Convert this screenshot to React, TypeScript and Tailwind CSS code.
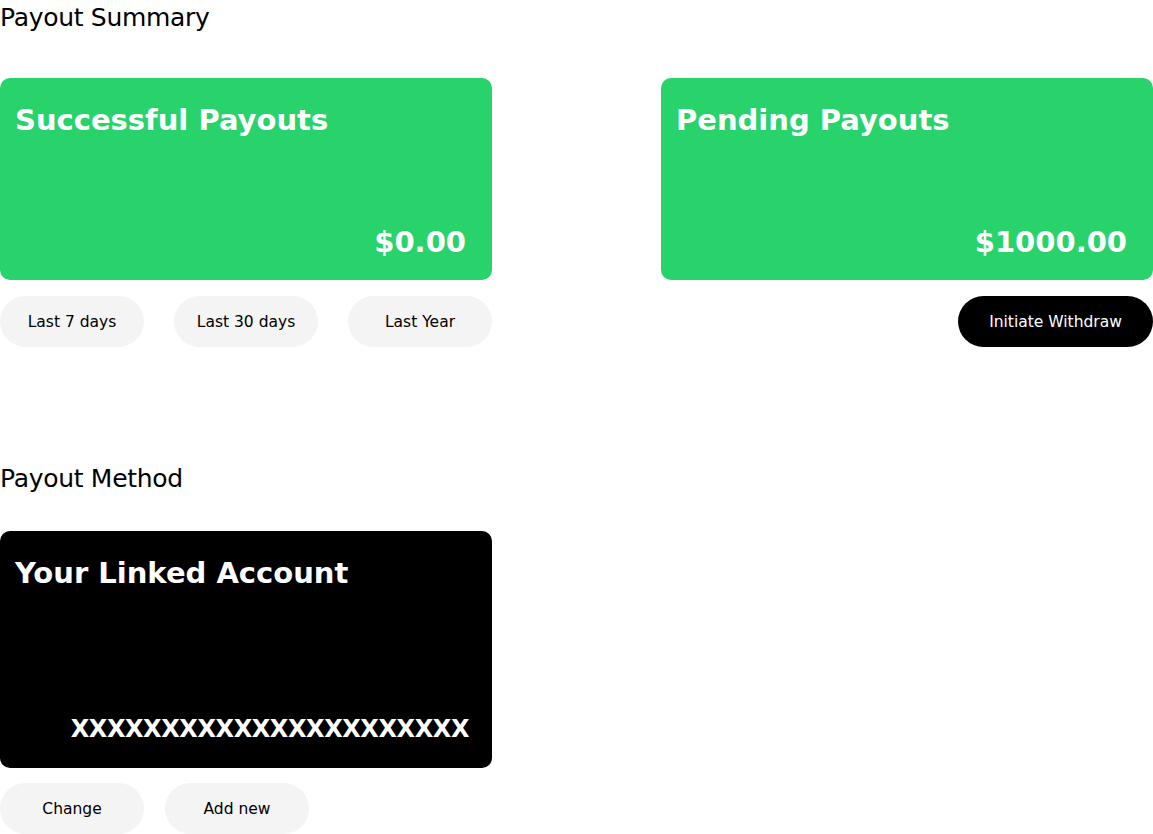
export default function App() {
  const ranges = ['Last 7 days', 'Last 30 days', 'Last Year'];

  return (
    <div className="w-[1153px] bg-white text-black font-['DejaVu_Sans',sans-serif]">
      {/* Payout Summary */}
      <h2 className="text-[25px] leading-[36px] tracking-[-0.3px]">Payout Summary</h2>
      <div className="mt-[42px] flex justify-between">
        <div className="w-[492px]">
          <div className="h-[202px] rounded-[10px] bg-[#28d36c] text-white flex flex-col justify-between pl-[15px] pr-[26px] pt-[22px] pb-[18px]">
            <h3 className="text-[29px] leading-[40px] font-semibold">Successful Payouts</h3>
            <p className="text-right text-[29px] leading-[40px] font-semibold">$0.00</p>
          </div>
          <div className="mt-[16px] flex justify-between">
            {ranges.map((r) => (
              <button
                key={r}
                className="w-[144px] h-[51px] pt-[3px] rounded-full bg-[#f4f4f4] text-[15.5px]"
              >
                {r}
              </button>
            ))}
          </div>
        </div>

        <div className="w-[492px]">
          <div className="h-[202px] rounded-[10px] bg-[#28d36c] text-white flex flex-col justify-between pl-[15px] pr-[26px] pt-[22px] pb-[18px]">
            <h3 className="text-[29px] leading-[40px] font-semibold">Pending Payouts</h3>
            <p className="text-right text-[29px] leading-[40px] font-semibold">$1000.00</p>
          </div>
          <div className="mt-[16px] flex justify-end">
            <button className="w-[195px] h-[51px] pt-[3px] rounded-full bg-black text-white text-[15.5px]">
              Initiate Withdraw
            </button>
          </div>
        </div>
      </div>

      {/* Payout Method */}
      <h2 className="mt-[114px] text-[25px] leading-[36px] tracking-[-0.3px]">Payout Method</h2>
      <div className="mt-[34px] w-[492px]">
        <div className="h-[237px] rounded-[10px] bg-black text-white flex flex-col justify-between pl-[15px] pr-[23px] pt-[22px] pb-[22px]">
          <h3 className="text-[29px] leading-[40px] font-semibold">Your Linked Account</h3>
          <p className="text-right text-[24px] leading-[34px] font-bold tracking-[-0.4px]">
            XXXXXXXXXXXXXXXXXXXXXX
          </p>
        </div>
        <div className="mt-[15px] flex gap-[21px]">
          {['Change', 'Add new'].map((b) => (
            <button
              key={b}
              className="w-[144px] h-[51px] pt-[3px] rounded-full bg-[#f4f4f4] text-[15.5px]"
            >
              {b}
            </button>
          ))}
        </div>
      </div>
    </div>
  );
}
